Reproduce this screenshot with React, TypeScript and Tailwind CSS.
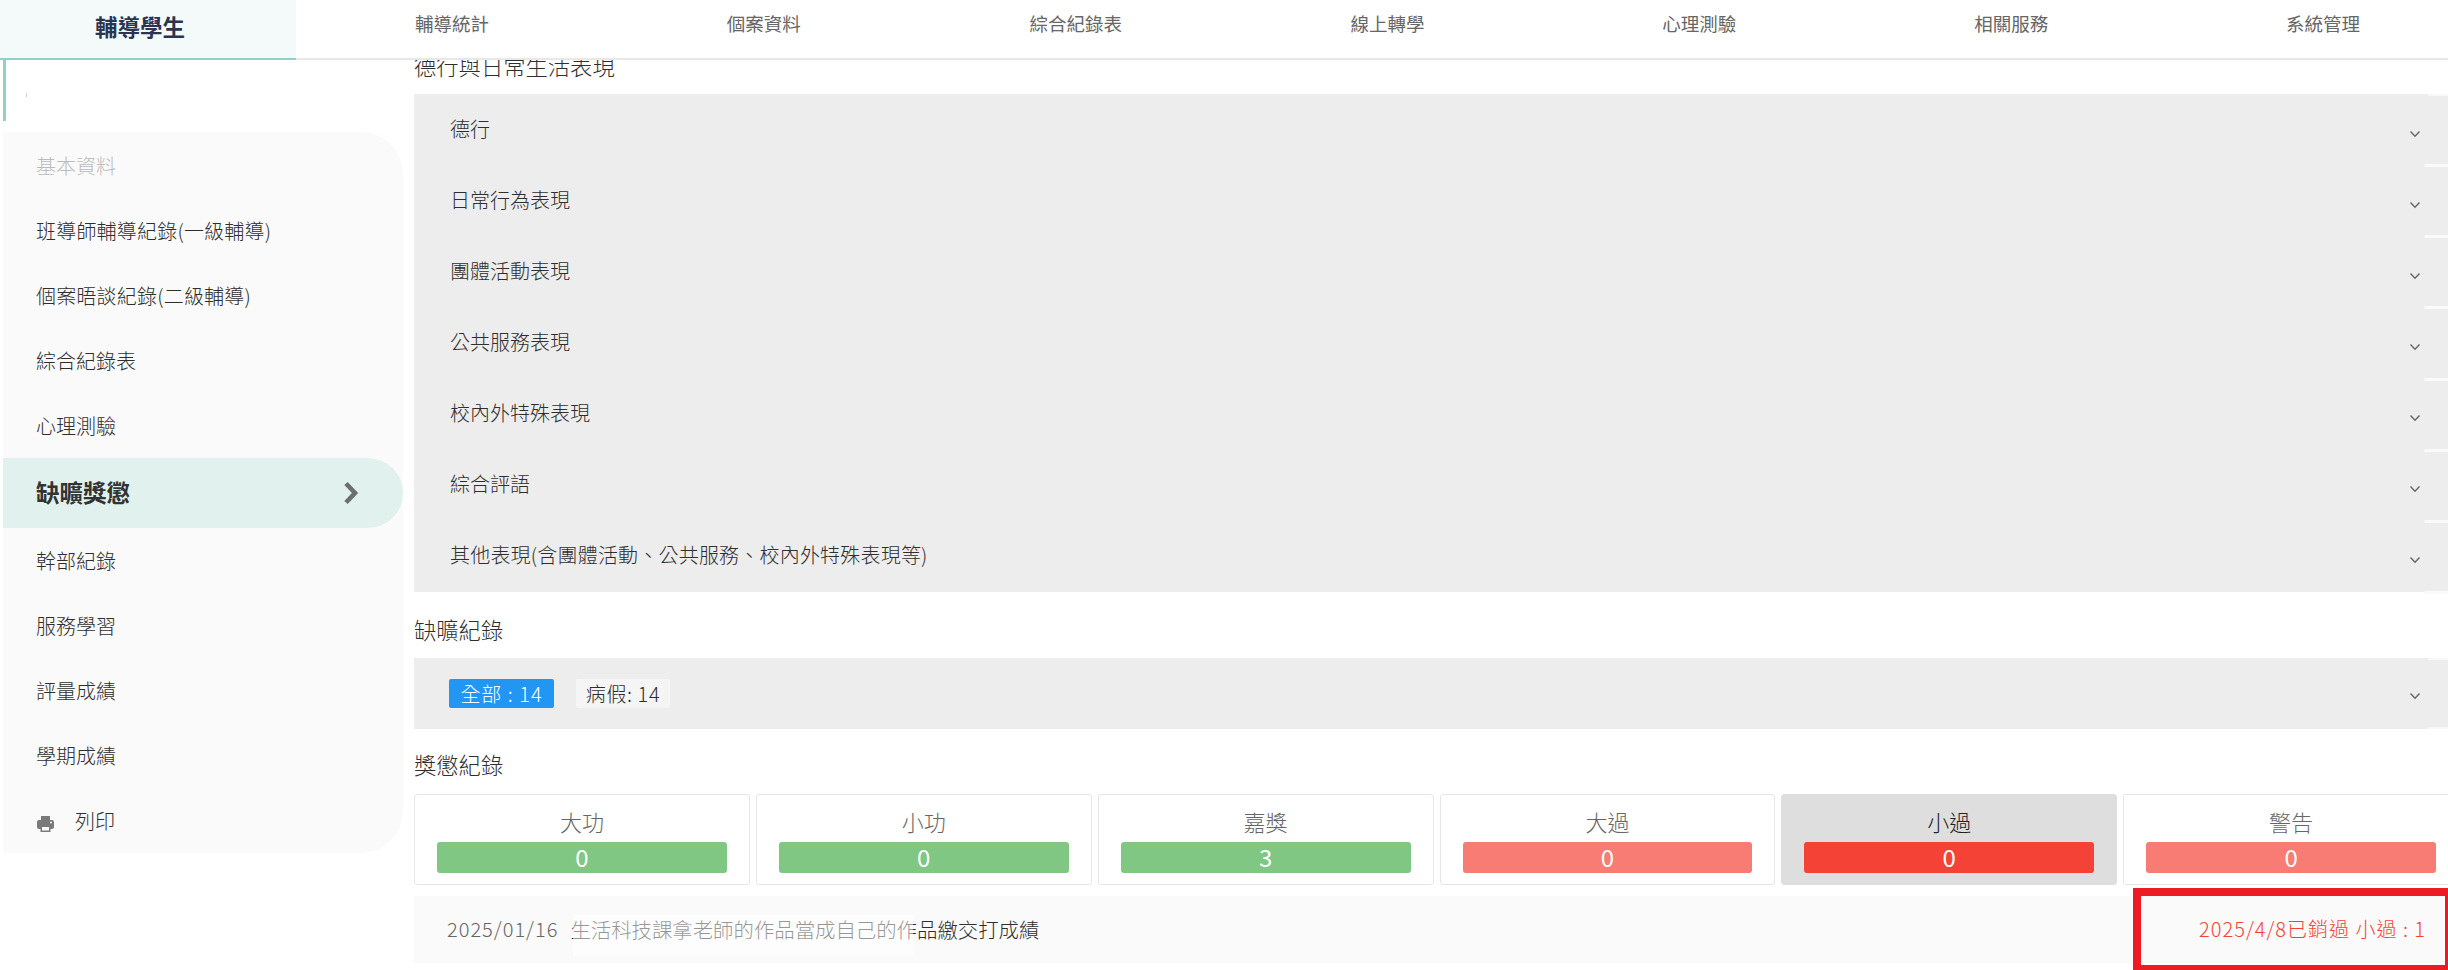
const rows = ["德行","日常行為表現","團體活動表現","公共服務表現","校內外特殊表現","綜合評語","其他表現(含團體活動、公共服務、校內外特殊表現等)"];
const nav = ["輔導統計","個案資料","綜合紀錄表","線上轉學","心理測驗","相關服務","系統管理"];
const side = ["班導師輔導紀錄(一級輔導)","個案晤談紀錄(二級輔導)","綜合紀錄表","心理測驗"];
const side2 = ["幹部紀錄","服務學習","評量成績","學期成績"];
const cards = [
  {l:"大功",v:"0",c:"bg-[#81c784]"},
  {l:"小功",v:"0",c:"bg-[#81c784]"},
  {l:"嘉獎",v:"3",c:"bg-[#81c784]"},
  {l:"大過",v:"0",c:"bg-[#f87c73]"},
  {l:"小過",v:"0",c:"bg-[#f44336]",active:true},
  {l:"警告",v:"0",c:"bg-[#f87c73]"},
];

function Chevron({ className }: { className: string }) {
  return (
    <svg width="12" height="8" viewBox="0 0 12 8" fill="none" className={className}>
      <path d="M1.5 1.5 L6 6.2 L10.5 1.5" stroke="#666" strokeWidth="1.4" />
    </svg>
  );
}

export default function App() {
  return (
    <div className="relative w-[2448px] h-[970px] overflow-hidden bg-white text-[20px] text-[#2e2e2e] font-['Noto_Sans_CJK_TC','Noto_Sans',sans-serif] font-light">
      <header className="relative z-10 flex h-[60px] bg-white border-b-2 border-[#e8e8e8]">
        <div className="w-[296px] h-[60px] shrink-0 bg-[#f4f9f9] border-b-2 border-[#92d0c9] flex justify-center pt-[8px] pr-[16px] text-[22.5px] font-bold text-[#2c3550] leading-[36px]">輔導學生</div>
        <nav className="grid grid-cols-7 w-[2183px] shrink-0">
          {nav.map((n) => (
            <div key={n} className="text-center text-[18.5px] font-normal text-[#666] pt-[7px] leading-[32px]">{n}</div>
          ))}
        </nav>
      </header>
      <div className="flex">
        <aside className="w-[414px] shrink-0 pl-[3px]">
          <div className="h-[61px] border-l-[3px] border-[#92d0c9] relative">
            <span className="absolute left-[20px] top-[33px] w-px h-[4px] bg-[#cfcfcf]"></span>
          </div>
          <div className="mt-[11px] w-[400px] bg-[#fafafa] rounded-r-[42px] pt-px leading-[28px]">
            <div className="h-[65px] flex items-center pl-[33px] text-[#bbb]">基本資料</div>
            {side.map((s, i) => (
              <div key={s} className={i < 2 ? "h-[65px] flex items-center pl-[33px] tracking-[0.2px]" : "h-[65px] flex items-center pl-[33px]"}>{s}</div>
            ))}
            <div className="h-[70px] flex items-center justify-between pl-[33px] pr-[44px] pb-[2px] bg-[#e1f1ed] rounded-r-[36px] text-[23.5px] font-bold text-[#333]">
              <span>缺曠獎懲</span>
              <svg width="16" height="24" viewBox="0 0 16 24" className="mt-[2px]"><path d="M3 2.5 L12 12 L3 21.5" fill="none" stroke="#6b6f6f" strokeWidth="4.6" /></svg>
            </div>
            {side2.map((s) => (
              <div key={s} className="h-[65px] flex items-center pl-[33px]">{s}</div>
            ))}
            <div className="h-[65px] flex items-center pl-[34px] gap-[21px]">
              <svg width="17" height="16" viewBox="0 0 17 16" className="mt-[6px]">
                <rect x="4" y="0" width="9" height="5" fill="#7a7a7a" />
                <rect x="0" y="4" width="17" height="9" rx="2" fill="#7a7a7a" />
                <rect x="3.5" y="9.5" width="10" height="6.5" fill="#7a7a7a" />
                <rect x="5" y="11" width="7" height="3.5" fill="#fafafa" />
                <circle cx="14" cy="6.5" r="0.9" fill="#fafafa" />
              </svg>
              <span>列印</span>
            </div>
          </div>
        </aside>
        <main className="w-[2034px] shrink-0 -mt-[17px]">
          <h2 className="text-[22.3px] font-light leading-[44px] mb-[7px]">德行與日常生活表現</h2>
          <div className="relative bg-[#ededed]">
            <span className="absolute right-0 top-0 w-[20px] h-[2px] bg-[#f8f8f8] rounded-l-[2px]"></span>
            {rows.map((r, i) => (
              <div key={r} className="relative h-[71.14px] flex items-center justify-between pl-[36px] pr-[27px] pb-[2px]">
                <span className={i === 6 ? "tracking-[0.2px]" : ""}>{r}</span>
                <Chevron className="shrink-0 mt-[10px]" />
                <span className="absolute right-0 bottom-[-2px] w-[24px] h-[3px] bg-[#fafafa] rounded-l-[2px]"></span>
              </div>
            ))}
          </div>
          <h2 className="text-[22.3px] font-light leading-[44px] mt-[15px]">缺曠紀錄</h2>
          <div className="relative h-[71px] mt-[7px] bg-[#ededed] flex items-center justify-between pl-[35px] pr-[27px]">
            <span className="absolute right-0 top-0 w-[20px] h-[2px] bg-[#f8f8f8] rounded-l-[2px]"></span>
            <span className="absolute right-0 bottom-0 w-[20px] h-[2px] bg-[#f8f8f8] rounded-l-[2px]"></span>
            <div className="flex gap-[22px] leading-[29px]">
              <span className="h-[29px] w-[105px] rounded-[2px] bg-[#2196f3] text-white text-center tracking-[1px]">全部 : 14</span>
              <span className="h-[29px] w-[94px] rounded-[2px] bg-[#f5f5f5] text-center tracking-[0.6px]">病假: 14</span>
            </div>
            <Chevron className="shrink-0 mt-[5px]" />
          </div>
          <h2 className="text-[22.3px] font-light leading-[42px] mt-[14px] mb-[9px]">獎懲紀錄</h2>
          <div className="grid grid-cols-6 gap-[6px] w-[2045px]">
            {cards.map((c) => (
              <div key={c.l} className={c.active ? "h-[91px] rounded-[3px] border border-[#dedede] bg-[#dedede] px-[22px] text-center text-[#222]" : "h-[91px] rounded-[3px] border border-[#e6e6e6] px-[22px] text-center text-[#666]"}>
                <div className="h-[47px] pt-[9px] text-[22px] leading-[34px]">{c.l}</div>
                <div className={`h-[31px] rounded-[3px] text-white text-[24px] leading-[29px] font-normal ${c.c}`}>{c.v}</div>
              </div>
            ))}
          </div>
          <div className="relative h-[67px] mt-[11px] bg-[#fafafa] flex items-center justify-between pl-[33px] pr-[22px]">
            <div className="flex gap-[12px]">
              <span className="text-[#666] tracking-[1px]">2025/01/16</span>
              <span className="text-[20.4px]">生活科技課拿老師的作品當成自己的作品繳交打成績</span>
            </div>
            <span className="text-[#f44336] tracking-[1px]">2025/4/8已銷過 小過 : 1</span>
            <div className="absolute left-[159px] top-[18px] w-[340px] h-[42px] bg-white/50"></div>
          </div>
        </main>
      </div>
      <div className="absolute left-[2133px] top-[888px] w-[315px] h-[82px] border-t-[8px] border-l-[8px] border-b-[5px] border-r-[3px] border-[#ed1c24]"></div>
    </div>
  );
}
